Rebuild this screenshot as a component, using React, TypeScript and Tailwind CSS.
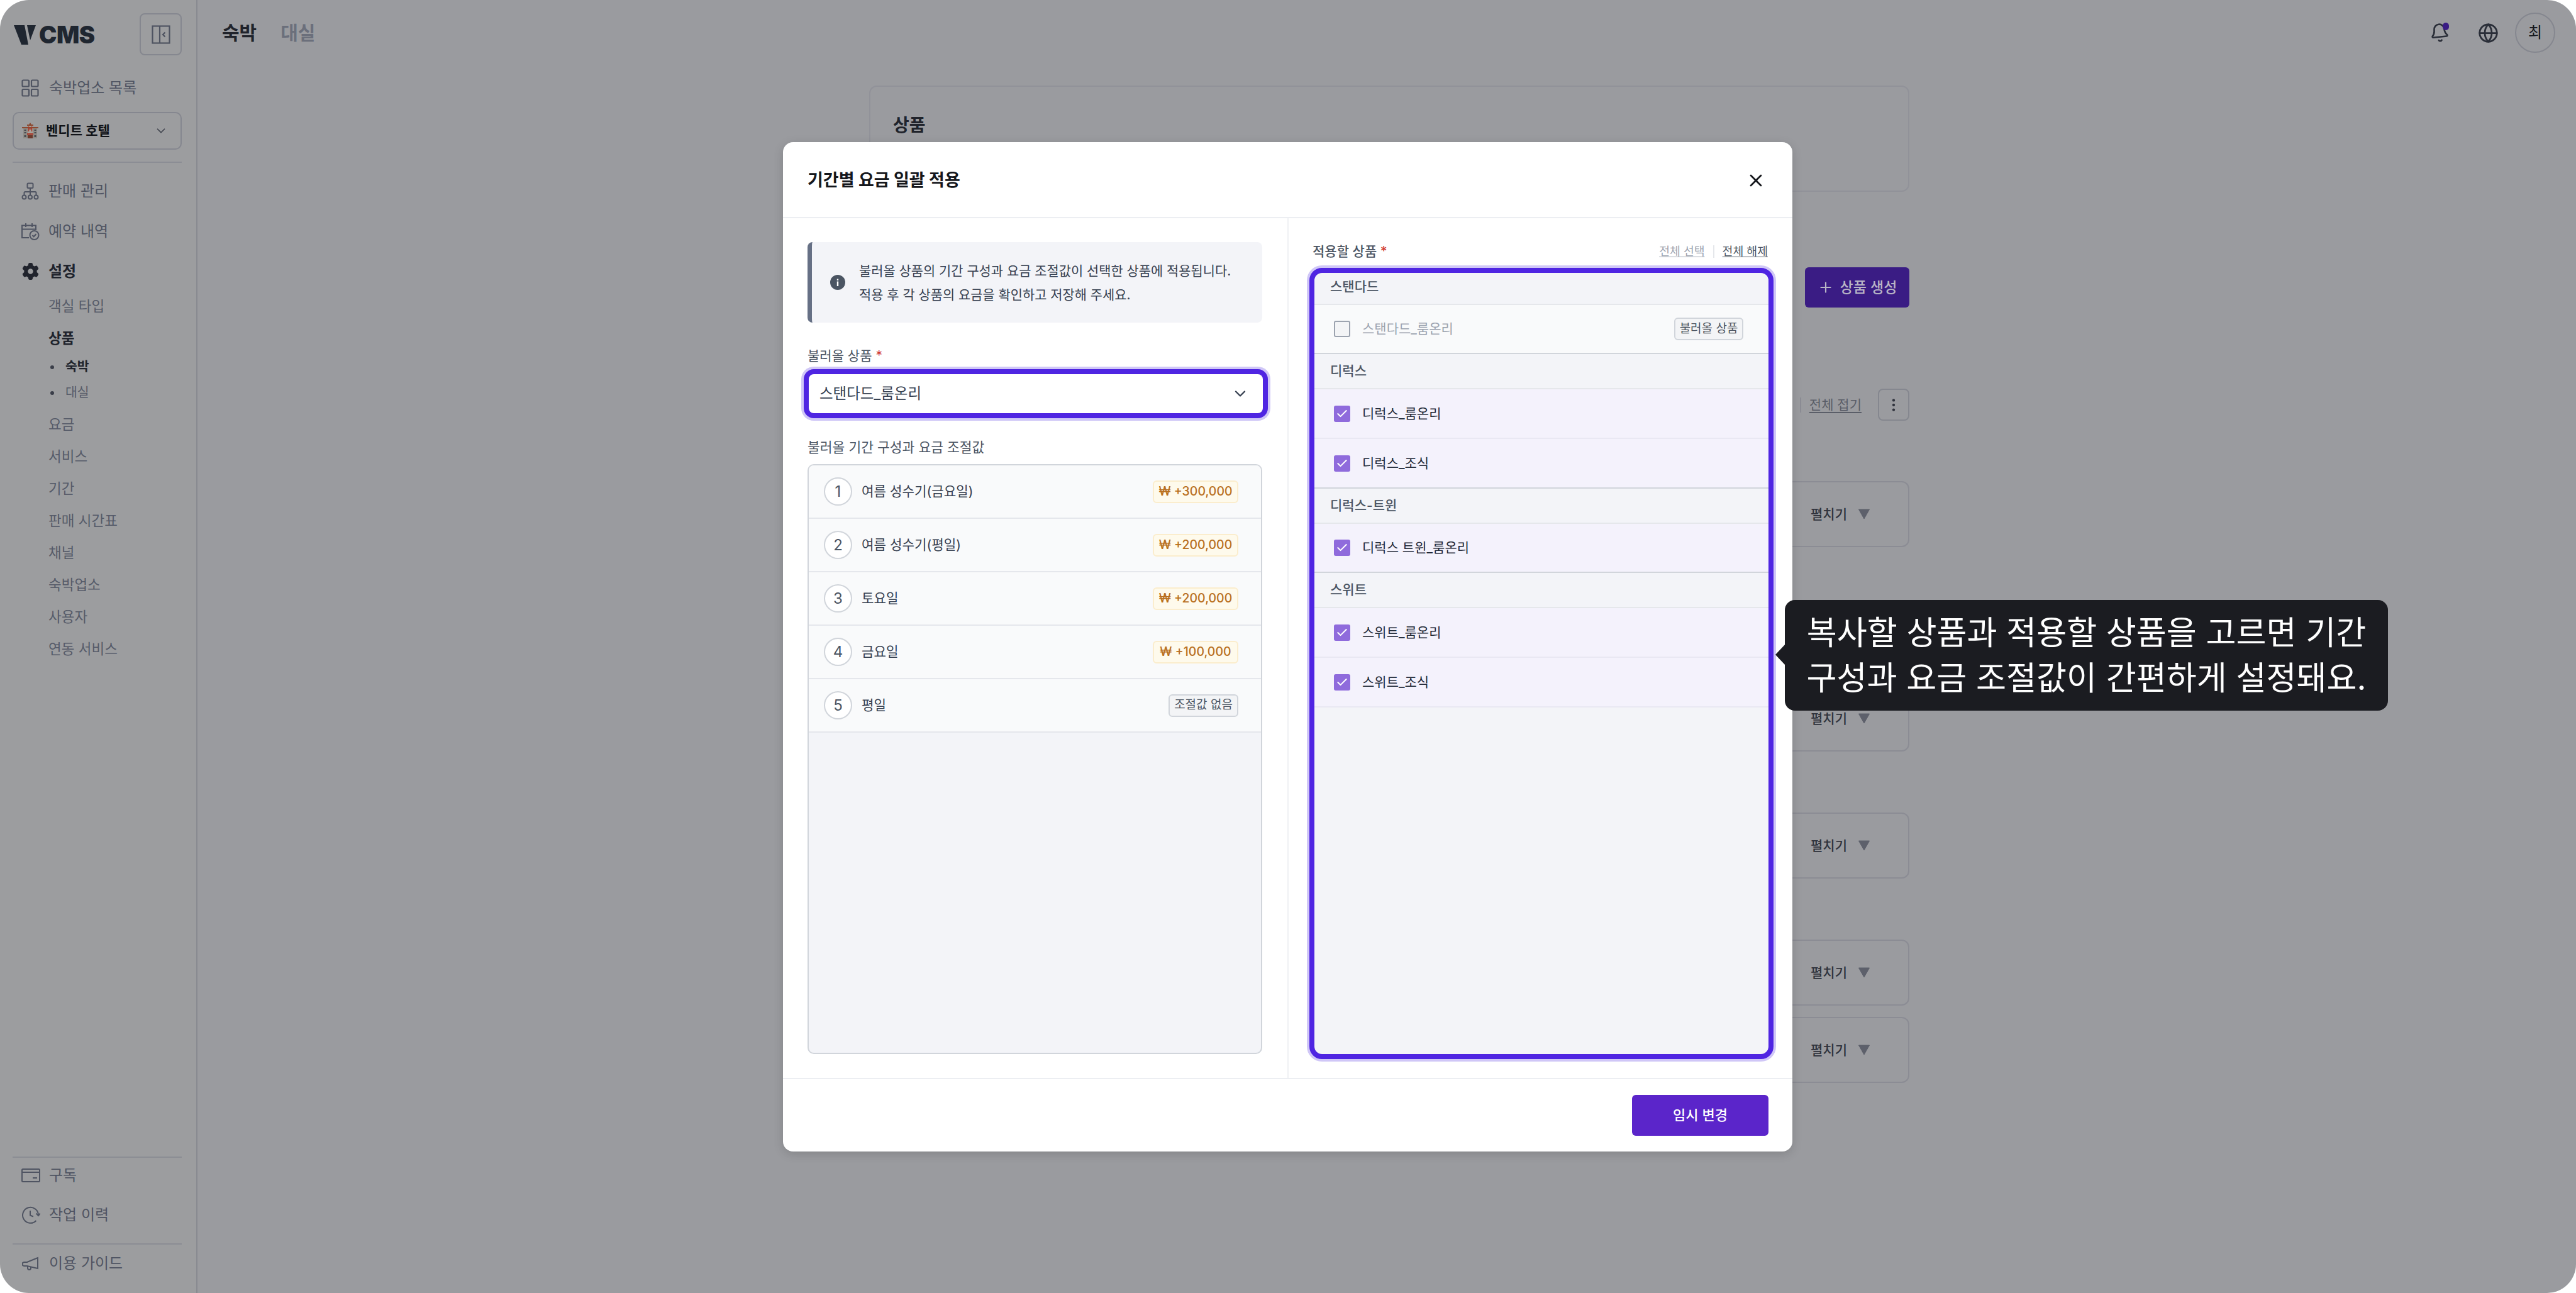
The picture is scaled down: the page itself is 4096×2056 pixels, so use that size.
import React from "react";
import { Bell, Check, ChevronDown, EllipsisVertical, Globe, Plus, X } from "lucide-react";
import { FaGear } from "react-icons/fa6";

const ink = "#4f5462";

function GridIcon() {
  return (
    <svg width="28" height="28" viewBox="0 0 28 28" fill="none" stroke={ink} strokeWidth="2.2">
      <rect x="1.5" y="1.5" width="10.5" height="10" rx="1.5" />
      <rect x="16" y="1.5" width="10.5" height="10" rx="1.5" />
      <rect x="1.5" y="16" width="10.5" height="10.5" rx="1.5" />
      <rect x="16" y="16" width="10.5" height="10.5" rx="1.5" />
    </svg>
  );
}
function TreeIcon() {
  return (
    <svg width="28" height="28" viewBox="0 0 28 28" fill="none" stroke={ink} strokeWidth="2">
      <rect x="9.5" y="1.5" width="9" height="7.5" rx="1.5" />
      <path d="M14 9v6M4.5 20v-3.5a1.5 1.5 0 0 1 1.5-1.5h16a1.5 1.5 0 0 1 1.5 1.5V20M14 15v5" />
      <circle cx="4.5" cy="23.5" r="3" />
      <circle cx="14" cy="23.5" r="3" />
      <circle cx="23.5" cy="23.5" r="3" />
    </svg>
  );
}
function CalendarCheckIcon() {
  return (
    <svg width="30" height="28" viewBox="0 0 30 28" fill="none" stroke={ink} strokeWidth="2">
      <path d="M13 24H2V4.5h22V12M2 10.5h22M8 1v6M18 1v6" />
      <circle cx="21.5" cy="20" r="7" />
      <path d="m18.5 20 2.2 2.2 3.8-4" />
    </svg>
  );
}
function CardIcon() {
  return (
    <svg width="30" height="24" viewBox="0 0 30 24" fill="none" stroke={ink} strokeWidth="2">
      <rect x="1" y="2" width="28" height="20" rx="1.5" />
      <path d="M1 7h28M18 16h7" />
    </svg>
  );
}
function HistoryIcon() {
  return (
    <svg width="30" height="28" viewBox="0 0 30 28" fill="none" stroke={ink} strokeWidth="2">
      <path d="M27 14A12.5 12.5 0 1 0 23.5 23" />
      <path d="m23.5 11.5 3.5 3.5 3-3.5M14 7v7.5l5 2" />
    </svg>
  );
}
function MegaphoneIcon() {
  return (
    <svg width="28" height="26" viewBox="0 0 28 26" fill="none" stroke={ink} strokeWidth="2">
      <path d="M25 4v17L8 17H3.5a2.5 2.5 0 0 1 0-6H8z" />
      <path d="M9 17.5v3a2.5 2.5 0 0 0 5 0v-2" />
    </svg>
  );
}
function PanelIcon() {
  return (
    <svg width="30" height="30" viewBox="0 0 30 30" fill="none" stroke={ink} strokeWidth="2.2">
      <rect x="1.5" y="1.5" width="27" height="27" />
      <path d="M13 1.5v27M21.5 11.5 18 15l3.5 3.5" />
    </svg>
  );
}
function HotelIcon() {
  return (
    <svg width="26" height="26" viewBox="0 0 26 26">
      <rect x="2" y="7" width="22" height="18" fill="#8d8a84" />
      <rect x="9" y="3" width="8" height="22" fill="#a8a39c" />
      <path d="M0 7h26v2H0zM8 3h10v2H8z" fill="#8a4a32" />
      <path d="M13 0l2 3h-4z" fill="#8a4a32" />
      <path d="M10.5 6v8M15.5 6v8M10.5 10h5" stroke="#a6392a" strokeWidth="1.6" />
      <rect x="9" y="20" width="8" height="5" fill="#6b3a2c" />
      <rect x="8" y="17" width="10" height="2.5" fill="#a6392a" />
      <path d="M3.5 11h3v2h-3zM3.5 15h3v2h-3zM19.5 11h3v2h-3zM19.5 15h3v2h-3zM3.5 20h3v3h-3zM19.5 20h3v3h-3z" fill="#464a52" />
    </svg>
  );
}
function InfoIcon() {
  return (
    <svg width="24" height="24" viewBox="0 0 24 24">
      <circle cx="12" cy="12" r="12" fill="#4b5563" />
      <rect x="10.8" y="10.5" width="2.4" height="7.5" fill="#fff" />
      <rect x="10.8" y="6.5" width="2.4" height="2.4" fill="#fff" />
    </svg>
  );
}

function NavItem({ icon, label, bold }: { icon: React.ReactNode; label: string; bold?: boolean }) {
  return (
    <div className="flex h-[63px] items-center">
      <div className="flex w-[32px] justify-center ml-[12px]">{icon}</div>
      <span className={bold ? "ml-[13px] text-[24px] font-bold text-[#20232c]" : "ml-[13px] text-[24px] text-[#4f5462]"}>{label}</span>
    </div>
  );
}

function SubItem({ label, bold }: { label: string; bold?: boolean }) {
  return (
    <div className={bold ? "flex h-[51px] items-center pl-[57px] text-[22.5px] font-bold text-[#20232c]" : "flex h-[51px] items-center pl-[57px] text-[22.5px] text-[#565b69]"}>
      {label}
    </div>
  );
}

function SubSubItem({ label, bold }: { label: string; bold?: boolean }) {
  return (
    <div className="flex h-[41px] items-center pl-[57px]">
      <span className="ml-[3px] h-[6px] w-[6px] rounded-full bg-[#3a3e49]" />
      <span className={bold ? "ml-[18px] text-[20.5px] font-bold text-[#20232c]" : "ml-[18px] text-[20.5px] text-[#565b69]"}>{label}</span>
    </div>
  );
}

function Sidebar() {
  return (
    <aside className="flex h-full w-[314px] shrink-0 flex-col border-r-2 border-r-[#888a90] bg-[#9c9d9f] pl-[20px] pr-[23px]">
      <div className="mt-[21px] flex h-[67px] items-center justify-between">
        <div className="ml-[2px] flex items-center">
          <svg width="35" height="32" viewBox="0 0 35 32">
            <path d="M0 1h17l6 31H12zM21 1h14l-9 24z" fill="#1f2630" />
          </svg>
          <span className="ml-[5px] font-['Inter'] text-[38px] font-black leading-none tracking-[-0.5px] text-[#1f2630]">CMS</span>
        </div>
        <div className="flex h-[67px] w-[67px] items-center justify-center rounded-[8px] border-2 border-[#85878f]">
          <PanelIcon />
        </div>
      </div>
      <div className="mt-[27px] flex h-[50px] items-center">
        <div className="ml-[14px] flex w-[28px] justify-center"><GridIcon /></div>
        <span className="ml-[16px] text-[24px] text-[#4f5462]">숙박업소 목록</span>
      </div>
      <div className="mt-[13px] flex h-[60px] items-center rounded-[10px] border-2 border-[#85878f] pl-[13px] pr-[20px]">
        <HotelIcon />
        <span className="ml-[12px] text-[21px] font-semibold text-[#111318]">벤디트 호텔</span>
        <ChevronDown className="ml-auto text-[#3f434d]" size={22} strokeWidth={1.8} />
      </div>
      <div className="mt-[19px] h-[2px] bg-[#8b8d94]" />
      <div className="mt-[13px]">
        <NavItem icon={<TreeIcon />} label="판매 관리" />
        <div className="mt-[1px]">
          <NavItem icon={<CalendarCheckIcon />} label="예약 내역" />
        </div>
        <div className="mt-[1px]">
          <NavItem icon={<FaGear size={27} color="#20232c" />} label="설정" bold />
        </div>
      </div>
      <div className="-mt-[2px]">
        <SubItem label="객실 타입" />
        <SubItem label="상품" bold />
      </div>
      <SubSubItem label="숙박" bold />
      <SubSubItem label="대실" />
      <div className="mt-[4px]">
        {["요금", "서비스", "기간", "판매 시간표", "채널", "숙박업소", "사용자", "연동 서비스"].map((s) => (
          <SubItem key={s} label={s} />
        ))}
      </div>
      <div className="mt-auto h-[2px] bg-[#8b8d94]" />
      <div className="mt-[-5px] flex h-[65px] items-center">
        <div className="ml-[14px] flex w-[30px] justify-center"><CardIcon /></div>
        <span className="ml-[14px] text-[24px] text-[#4f5462]">구독</span>
      </div>
      <div className="mt-[-2px] flex h-[65px] items-center">
        <div className="ml-[14px] flex w-[30px] justify-center"><HistoryIcon /></div>
        <span className="ml-[14px] text-[24px] text-[#4f5462]">작업 이력</span>
      </div>
      <div className="mt-[13px] h-[2px] bg-[#8b8d94]" />
      <div className="mb-[17px] flex h-[60px] items-center">
        <div className="ml-[14px] flex w-[30px] justify-center"><MegaphoneIcon /></div>
        <span className="ml-[14px] text-[24px] text-[#4f5462]">이용 가이드</span>
      </div>
    </aside>
  );
}

function FoldCard({ className }: { className: string }) {
  return (
    <div className={`flex h-[105px] items-center justify-end gap-[17px] rounded-[12px] border-2 border-[#8b8c94] pr-[60px] ${className}`}>
      <span className="text-[21px] font-medium text-[#30333d]">펼치기</span>
      <svg width="20" height="17" viewBox="0 0 20 17"><path d="M1.5 1h17L10 16z" fill="#5d606b" stroke="#5d606b" strokeLinejoin="round" /></svg>
    </div>
  );
}

function Main() {
  return (
    <main className="flex h-full flex-1 flex-col bg-[#9a9b9f]">
      <header className="flex h-[104px] shrink-0 items-center pl-[39px] pr-[33px]">
        <span className="text-[30px] font-bold text-[#20232b]">숙박</span>
        <span className="ml-[38px] text-[30px] font-bold text-[#6b6f7b]">대실</span>
        <div className="relative ml-auto mr-[45px]">
          <Bell size={32} strokeWidth={2} className="-rotate-6 text-[#2a2e38]" />
          <span className="absolute right-[1px] top-[0px] h-[12px] w-[10px] rounded-full bg-[#3a1c84]" />
        </div>
        <Globe size={33} strokeWidth={2} className="mr-[26px] text-[#2a2e38]" />
        <div className="flex h-[64px] w-[64px] items-center justify-center rounded-full border-2 border-[#85878f] text-[24px] text-[#15171c]">최</div>
      </header>
      <div className="ml-[1068px] w-[1654px]">
        <div className="mt-[32px] h-[169px] rounded-[12px] border-2 border-[#919299] pl-[36px] pt-[41px] text-[28px] font-bold leading-[40px] text-[#20232b]">상품</div>
        <div className="mt-[120px] flex justify-end">
          <div className="flex h-[64px] w-[166px] items-center justify-center gap-[10px] rounded-[6px] bg-[#3a1c84] text-[23px] font-medium text-[#b9b6c6]">
            <Plus size={26} strokeWidth={2} />
            상품 생성
          </div>
        </div>
        <div className="mt-[129px] flex h-[51px] items-center justify-end">
          <span className="mr-[13px] h-[24px] w-[2px] bg-[#8b8c94]" />
          <span className="text-[21px] text-[#5a5e68] underline underline-offset-4">전체 접기</span>
          <div className="ml-[26px] flex h-[51px] w-[50px] items-center justify-center rounded-[8px] border-2 border-[#85878f]">
            <EllipsisVertical size={26} className="text-[#30333d]" />
          </div>
        </div>
        <FoldCard className="mt-[96px]" />
        <FoldCard className="mt-[220px]" />
        <FoldCard className="mt-[97px]" />
        <FoldCard className="mt-[97px]" />
        <FoldCard className="mt-[18px]" />
      </div>
    </main>
  );
}

function SourceRow({ n, name, fee }: { n: number; name: string; fee?: string }) {
  return (
    <div className="flex h-[85px] items-center border-b-2 border-b-[#e5e7ec] bg-[#f9fafb] pl-[24px] pr-[36px]">
      <span className="flex h-[45px] w-[45px] items-center justify-center rounded-full border-2 border-[#d1d5db] bg-white text-[24px] text-[#4b5563]">{n}</span>
      <span className="ml-[15px] text-[21.2px] text-[#374151]">{name}</span>
      {fee ? (
        <span className="ml-auto flex h-[36px] w-[136px] items-center justify-center rounded-[6px] border-2 border-[#fbedcd] bg-[#fefaec] text-[19.5px] font-medium text-[#b9701f]">{fee}</span>
      ) : (
        <span className="ml-auto flex h-[36px] w-[111px] items-center justify-center rounded-[6px] border-2 border-[#d1d5db] bg-[#f3f4f6] text-[19px] text-[#4b5563]">조절값 없음</span>
      )}
    </div>
  );
}

function GroupHeader({ label, first }: { label: string; first?: boolean }) {
  return (
    <div className={first ? "flex h-[51px] items-center border-b-2 border-b-[#e5e7eb] pb-[5px] pl-[25px] text-[21px] font-medium text-[#4b5563]" : "flex h-[56px] items-center border-b-2 border-b-[#e5e7eb] pl-[25px] text-[21px] font-medium text-[#4b5563]"}>
      {label}
    </div>
  );
}

function TargetRow({ label, strong, tall }: { label: string; strong?: boolean; tall?: boolean }) {
  const h = tall ? "h-[79px]" : "h-[78px]";
  const line = strong ? "border-b-[#d1d5db]" : "border-b-[#e9e8f3]";
  return (
    <div className={`flex ${h} items-center border-b-2 ${line} bg-[#f4f2fc] pl-[31px]`}>
      <span className="flex h-[26px] w-[26px] items-center justify-center rounded-[3px] bg-[#8f6bdc]">
        <Check size={20} strokeWidth={2.4} className="text-white" />
      </span>
      <span className="ml-[19px] text-[21px] text-[#1f2937]">{label}</span>
    </div>
  );
}

function Modal() {
  return (
    <div className="absolute left-[1245px] top-[226px] flex h-[1605px] w-[1605px] flex-col rounded-[16px] bg-white shadow-[0_4px_16px_rgba(0,0,0,0.15)]">
      <div className="flex h-[121px] shrink-0 items-center justify-between border-b-2 border-b-[#eceef2] pl-[39px] pr-[42px]">
        <span className="translate-y-[2px] text-[27px] font-bold text-[#15171c]">기간별 요금 일괄 적용</span>
        <X size={32} strokeWidth={2} className="translate-y-[1px] text-[#15171c]" />
      </div>
      <div className="flex min-h-0 flex-1">
        <section className="flex w-[804px] flex-col border-r-2 border-r-[#f0f1f4] pb-[38px] pl-[39px] pr-[40px] pt-[38px]">
          <div className="flex h-[128px] items-center rounded-[8px] border-l-[7px] border-l-[#667085] bg-[#f3f4f8] pl-[29px]">
            <InfoIcon />
            <p className="ml-[22px] translate-y-[1px] text-[20.9px] leading-[38px] text-[#374151]">
              불러올 상품의 기간 구성과 요금 조절값이 선택한 상품에 적용됩니다.
              <br />
              적용 후 각 상품의 요금을 확인하고 저장해 주세요.
            </p>
          </div>
          <div className="mt-[38px] text-[21px] leading-[30px] text-[#4b5563]">
            불러올 상품 <span className="text-[#d13d35]">*</span>
          </div>
          <div className="-ml-[6px] -mr-[9px] mt-[6px] flex h-[78px] items-center rounded-[16px] border-[8px] border-[#4f25e2] bg-white pl-[17px] pr-[22px] shadow-[0_0_0_4px_#d0c7f7]">
            <span className="text-[23.5px] text-[#374151]">스탠다드_룸온리</span>
            <ChevronDown size={28} strokeWidth={2} className="ml-auto text-[#374151]" />
          </div>
          <div className="mt-[31px] text-[21.5px] leading-[30px] text-[#4b5563]">불러올 기간 구성과 요금 조절값</div>
          <div className="mt-[12px] flex-1 overflow-hidden rounded-[10px] border-2 border-[#d1d5db] bg-[#f3f4f8]">
            <SourceRow n={1} name="여름 성수기(금요일)" fee="₩ +300,000" />
            <SourceRow n={2} name="여름 성수기(평일)" fee="₩ +200,000" />
            <SourceRow n={3} name="토요일" fee="₩ +200,000" />
            <SourceRow n={4} name="금요일" fee="₩ +100,000" />
            <SourceRow n={5} name="평일" />
          </div>
        </section>
        <section className="flex flex-1 flex-col pb-[30px] pl-[38px] pr-[39px] pt-[38px]">
          <div className="flex h-[30px] items-center justify-between">
            <span className="text-[21px] font-medium text-[#4b5563]">
              적용할 상품 <span className="text-[#d13d35]">*</span>
            </span>
            <div className="flex items-center text-[18.3px]">
              <span className="text-[#9ca3af] underline underline-offset-2">전체 선택</span>
              <span className="mx-[13px] h-[20px] w-[2px] bg-[#e5e7eb]" />
              <span className="text-[#4b5563] underline underline-offset-2">전체 해제</span>
            </div>
          </div>
          <div className="-ml-[5px] -mr-[9px] mt-[11px] flex-1 overflow-hidden rounded-[20px] border-[8px] border-[#4f25e2] bg-[#f3f4f8] shadow-[0_0_0_4px_#d0c7f7]">
            <GroupHeader label="스탠다드" first />
            <div className="flex h-[78px] items-center border-b-2 border-b-[#d1d5db] bg-[#f9fafb] pl-[31px] pr-[40px]">
              <span className="h-[26px] w-[26px] rounded-[3px] border-2 border-[#9ca3af] bg-[#f3f4f6]" />
              <span className="ml-[19px] text-[21px] text-[#9ca3af]">스탠다드_룸온리</span>
              <span className="ml-auto flex h-[36px] w-[110px] items-center justify-center rounded-[6px] border-2 border-[#d1d5db] bg-[#f3f4f6] text-[19px] text-[#4b5563]">불러올 상품</span>
            </div>
            <GroupHeader label="디럭스" />
            <TargetRow label="디럭스_룸온리" tall />
            <TargetRow label="디럭스_조식" strong tall />
            <GroupHeader label="디럭스-트윈" />
            <TargetRow label="디럭스 트윈_룸온리" strong />
            <GroupHeader label="스위트" />
            <TargetRow label="스위트_룸온리" tall />
            <TargetRow label="스위트_조식" tall />
          </div>
        </section>
      </div>
      <div className="flex h-[117px] shrink-0 items-center justify-end border-t-2 border-t-[#eceef2] pr-[38px]">
        <div className="flex h-[65px] w-[217px] items-center justify-center rounded-[6px] bg-[#5b25ca] text-[22px] font-medium text-white">임시 변경</div>
      </div>
    </div>
  );
}

function Tooltip() {
  return (
    <div className="absolute left-[2838px] top-[954px] flex h-[176px] w-[959px] items-center justify-center rounded-[16px] bg-[#1b1c21] text-center text-[52.2px] leading-[72px] text-white">
      <svg className="absolute -left-[15px] top-[70px]" width="16" height="34" viewBox="0 0 16 34"><path d="M16 0 0 17l16 17z" fill="#1b1c21" /></svg>
      <p>
        복사할 상품과 적용할 상품을 고르면 기간
        <br />
        구성과 요금 조절값이 간편하게 설정돼요.
      </p>
    </div>
  );
}

export default function App() {
  return (
    <div className="relative h-[2056px] w-[4096px] overflow-hidden bg-white font-['Inter','Noto_Sans_CJK_KR',sans-serif]">
      <div className="flex h-full w-full overflow-hidden rounded-[46px]">
        <Sidebar />
        <Main />
      </div>
      <Modal />
      <Tooltip />
    </div>
  );
}
